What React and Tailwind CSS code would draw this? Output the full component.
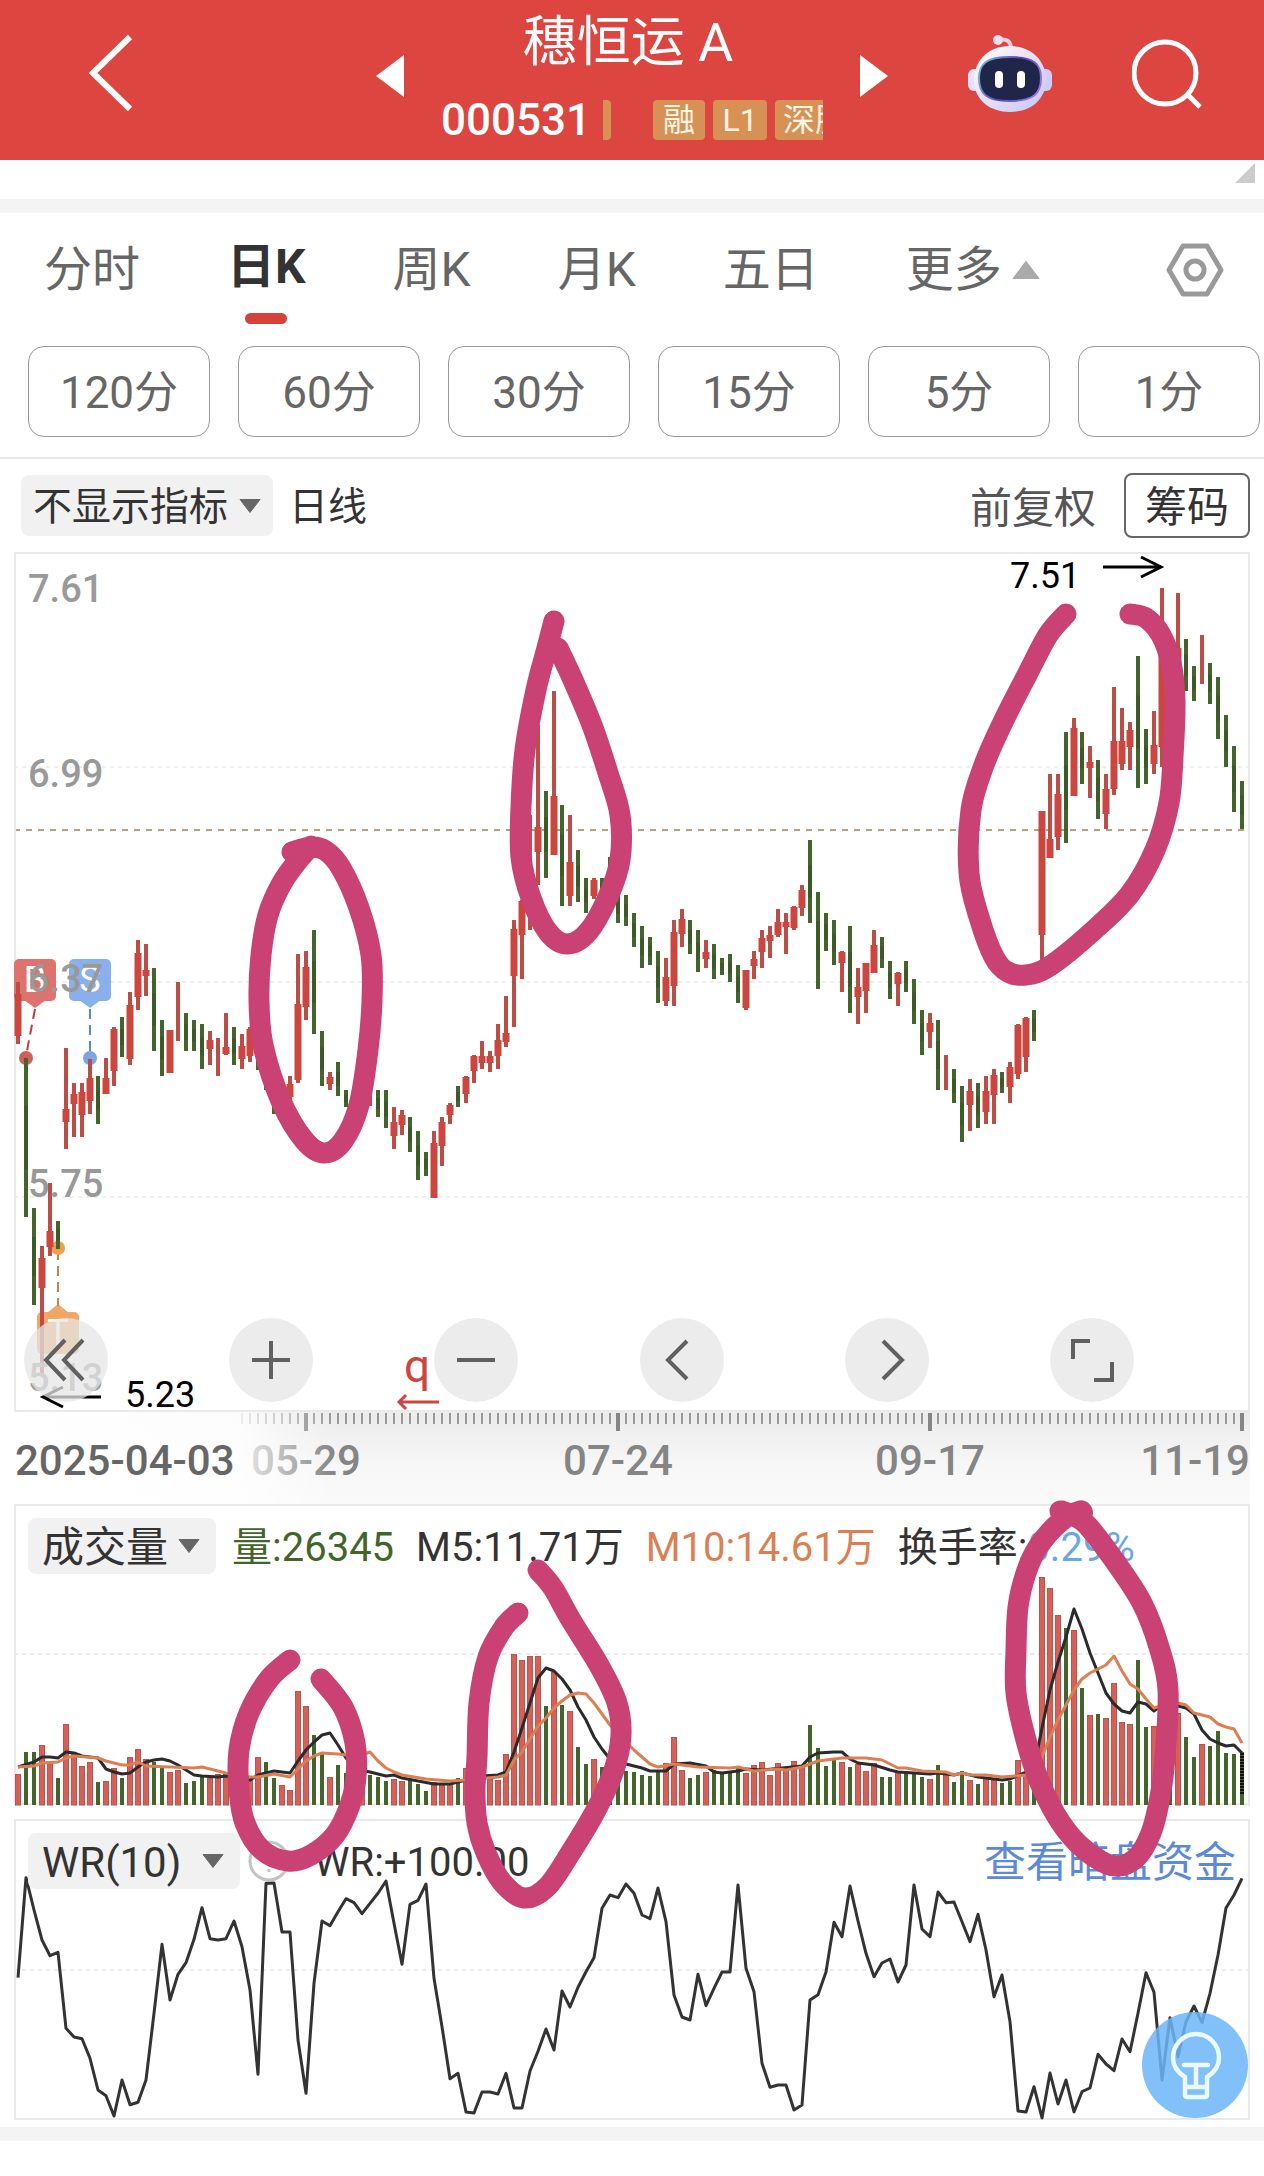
import React from "react";

const RED = "#cb463e";
const WICK = "#bd4d44";
const GREEN = "#43652b";
const GREEN_BODY = "#3a5b24";

/* index, kind, high, low, body top, body bottom (chart units) */
const CANDLES = [
  [0, "R", 982, 1044, 994, 1036], [1, "G", 1058, 1217], [2, "G", 1208, 1305],
  [3, "R", 1246, 1374, 1258, 1288], [4, "R", 1183, 1256, 1231, 1247], [5, "G", 1221, 1249],
  [6, "R", 1048, 1149, 1109, 1122], [7, "R", 1083, 1137, 1094, 1104], [8, "R", 1083, 1137, 1092, 1115],
  [9, "R", 1059, 1114, 1078, 1101], [10, "G", 1076, 1124], [11, "R", 1058, 1094, 1078, 1094],
  [12, "R", 1027, 1086, 1029, 1071], [13, "G", 1017, 1057], [14, "R", 992, 1065, 1005, 1059],
  [15, "R", 940, 1010, 953, 997], [16, "R", 944, 996, 970, 976], [17, "G", 968, 1051],
  [18, "G", 1020, 1076], [19, "R", 1030, 1073, 1030, 1073], [20, "R", 982, 1041],
  [21, "G", 1013, 1051], [22, "G", 1020, 1051], [23, "G", 1024, 1069],
  [24, "R", 1031, 1065, 1040, 1049], [25, "R", 1038, 1076], [26, "R", 1013, 1055, 1047, 1054],
  [27, "G", 1027, 1065], [28, "R", 1034, 1069, 1046, 1059], [29, "R", 1027, 1062, 1029, 1056],
  [30, "G", 1040, 1070], [31, "G", 1055, 1090], [32, "G", 1075, 1114], [33, "R", 1079, 1110],
  [34, "R", 1076, 1102, 1084, 1097], [35, "R", 954, 1083, 1004, 1080], [36, "R", 951, 1020, 967, 1007],
  [37, "G", 930, 1034], [38, "G", 1031, 1086], [39, "R", 1072, 1090, 1077, 1084],
  [40, "G", 1062, 1096], [41, "G", 1090, 1107], [42, "G", 1090, 1115], [43, "R", 1090, 1110],
  [44, "R", 1088, 1106], [45, "G", 1090, 1117], [46, "G", 1090, 1128],
  [47, "R", 1107, 1149, 1122, 1136], [48, "R", 1110, 1135, 1115, 1125], [49, "G", 1117, 1152],
  [50, "G", 1131, 1180], [51, "G", 1152, 1176], [52, "R", 1131, 1198, 1143, 1198],
  [53, "R", 1117, 1166, 1122, 1146], [54, "R", 1103, 1124, 1105, 1115], [55, "G", 1086, 1107],
  [56, "R", 1076, 1103, 1077, 1094], [57, "R", 1055, 1083, 1056, 1071], [58, "R", 1041, 1069, 1056, 1063],
  [59, "R", 1051, 1072, 1056, 1063], [60, "R", 1024, 1069, 1040, 1056], [61, "R", 996, 1047, 1033, 1042],
  [62, "R", 920, 1027, 929, 976], [63, "R", 900, 979, 901, 935], [64, "R", 815, 930],
  [65, "R", 725, 885, 827, 852], [66, "G", 791, 878], [67, "R", 691, 855, 796, 855],
  [68, "G", 805, 906], [69, "R", 815, 906, 862, 896], [70, "G", 850, 902], [71, "G", 878, 913],
  [72, "R", 878, 899, 880, 896], [73, "G", 878, 899], [74, "G", 857, 907], [75, "G", 893, 923],
  [76, "G", 895, 926], [77, "G", 913, 947], [78, "G", 926, 968], [79, "G", 937, 965],
  [80, "G", 951, 1003], [81, "R", 958, 1006, 977, 1001], [82, "R", 920, 1006, 932, 986],
  [83, "R", 909, 947, 919, 934], [84, "G", 920, 954], [85, "G", 930, 972], [86, "R", 940, 968, 952, 959],
  [87, "G", 944, 979], [88, "G", 958, 975], [89, "G", 954, 982], [90, "G", 965, 1003],
  [91, "R", 970, 1010, 970, 1008], [92, "R", 951, 979, 959, 966], [93, "R", 930, 968, 938, 952],
  [94, "R", 926, 958, 935, 941], [95, "R", 909, 937, 922, 935], [96, "R", 913, 954, 922, 927],
  [97, "R", 906, 930, 907, 928], [98, "R", 885, 916, 890, 908], [99, "G", 840, 923],
  [100, "G", 892, 989], [101, "G", 913, 951], [102, "G", 920, 965], [103, "R", 951, 992, 952, 963],
  [104, "G", 926, 1013], [105, "R", 968, 1024, 987, 997], [106, "R", 963, 1013, 963, 991],
  [107, "R", 930, 973, 945, 973], [108, "G", 937, 968], [109, "G", 961, 999], [110, "R", 972, 1006, 973, 984],
  [111, "G", 961, 992], [112, "G", 979, 1024], [113, "G", 1010, 1055], [114, "R", 1013, 1048, 1023, 1032],
  [115, "G", 1020, 1090], [116, "R", 1055, 1090], [117, "G", 1069, 1103], [118, "G", 1086, 1142],
  [119, "R", 1079, 1131, 1091, 1105], [120, "G", 1083, 1128], [121, "R", 1076, 1124, 1091, 1112],
  [122, "R", 1069, 1124, 1075, 1095], [123, "G", 1072, 1093], [124, "R", 1062, 1103, 1067, 1087],
  [125, "R", 1024, 1079, 1025, 1074], [126, "R", 1017, 1072, 1018, 1057], [127, "G", 1010, 1041],
  [128, "R", 811, 965, 811, 935], [129, "R", 774, 858, 839, 858], [130, "R", 774, 850, 794, 837],
  [131, "G", 732, 843], [132, "R", 718, 796, 728, 796], [133, "G", 732, 784], [134, "R", 746, 798, 762, 768],
  [135, "G", 760, 819], [136, "R", 774, 829, 789, 814], [137, "R", 687, 795, 741, 789],
  [138, "R", 708, 770, 741, 764], [139, "R", 722, 770, 730, 747], [140, "G", 656, 788],
  [141, "G", 729, 784], [142, "R", 711, 774, 745, 764], [143, "R", 588, 767, 653, 747],
  [144, "G", 640, 700], [145, "R", 593, 700, 648, 700], [146, "G", 639, 691], [147, "G", 666, 701],
  [148, "R", 635, 684], [149, "G", 663, 704], [150, "G", 677, 739], [151, "G", 715, 767],
  [152, "G", 746, 812], [153, "G", 781, 829],
];

/* bar height per day, with R/G for up and down days */
const VOLUMES =
  "31R 53G 53G 60R 43R 27G 81R 51R 39R 43R 23G 24R 37R 27G 48R 56R 46R 43G 37G 33R 35R 22G 24G 28G 27R 31R 31R 25R 25G 25R 48R 43G 27G 20R 15R 114R 99R 70G 51G 28R 40G 32G 32G 30R 30G 28G 24G 26R 24R 25G 21G 14G 23R 22R 21R 27G 37R 28R 26R 26R 25R 51R 151R 145R 149R 149R 99G 133R 100G 94R 58G 41G 46R 38G 45G 32G 34G 33G 30G 29G 35G 42R 68R 35R 27G 30G 33R 35G 32G 32G 37G 32R 40R 43R 30R 42R 37R 44R 38R 80G 57G 39G 45G 43R 38G 41R 34R 42R 28G 28G 33R 33G 32G 28G 26R 40G 33R 23G 34G 25R 21G 27R 27R 22G 24G 45R 31R 42G 228R 217R 190R 177G 175R 117G 90R 91G 87R 122R 83R 81R 145G 78G 79R 115R 80G 92R 68G 48G 61R 59G 74G 52G 51G 53G"
    .split(" ");

const WR_POINTS = [
  503, 203, 300, 390, 437, 427, 655, 681, 686, 745, 840, 857, 918, 810, 884, 877, 810, 610, 403, 570, 493, 458,
  388, 293, 386, 390, 386, 333, 410, 540, 793, 220, 219, 366, 366, 690, 850, 520, 333, 347, 305, 266, 278, 311,
  280, 250, 213, 340, 463, 283, 271, 222, 505, 650, 806, 790, 906, 909, 846, 846, 852, 790, 894, 894, 783, 724,
  657, 720, 543, 591, 532, 485, 443, 295, 255, 263, 222, 250, 315, 326, 234, 335, 555, 621, 630, 493, 587, 535,
  486, 486, 225, 475, 545, 760, 832, 825, 825, 900, 885, 570, 554, 486, 337, 380, 228, 333, 430, 500, 459, 447,
  516, 465, 225, 357, 380, 246, 278, 276, 335, 395, 313, 420, 560, 495, 635, 903, 906, 830, 924, 789, 882, 810,
  906, 845, 834, 733, 762, 782, 687, 725, 610, 488, 547, 810, 623, 740, 635, 588, 638, 550, 435, 294, 255, 205,
];

const MA5 =
  "18,1767 34,1762 42,1757 50,1757 58,1758 66,1752 74,1753 82,1756 98,1758 106,1769 114,1772 122,1774 130,1773 138,1767 146,1762 154,1760 162,1759 170,1761 178,1765 186,1770 194,1775 202,1776 218,1777 226,1776 250,1780 258,1775 274,1771 290,1773 298,1761 306,1750 314,1742 322,1735 330,1733 338,1745 346,1758 360,1770 370,1772 386,1776 394,1775 402,1778 418,1781 434,1784 450,1784 466,1780 474,1778 482,1776 498,1775 506,1772 514,1752 522,1728 530,1703 538,1678 546,1668 554,1671 562,1679 570,1690 578,1707 586,1720 594,1737 602,1749 610,1759 626,1764 642,1768 650,1771 666,1771 674,1764 690,1763 706,1766 714,1772 722,1773 738,1771 746,1769 762,1770 802,1766 810,1757 818,1753 834,1752 842,1752 850,1759 858,1763 874,1765 890,1770 898,1772 914,1773 930,1774 938,1773 954,1775 962,1773 978,1777 994,1779 1002,1780 1010,1779 1026,1772 1034,1765 1038,1748 1042,1728 1050,1690 1058,1662 1066,1637 1074,1609 1082,1629 1090,1653 1098,1673 1106,1693 1114,1704 1122,1711 1130,1713 1138,1702 1146,1704 1154,1711 1162,1705 1178,1706 1186,1708 1194,1714 1202,1730 1210,1739 1218,1743 1226,1746 1234,1745 1242,1753";

const MA10 =
  "18,1767 34,1766 42,1763 58,1762 66,1758 74,1756 98,1758 106,1761 114,1763 122,1765 130,1765 138,1762 146,1766 170,1767 194,1768 202,1767 218,1771 226,1773 250,1777 258,1777 274,1774 290,1777 298,1769 306,1761 314,1756 322,1753 338,1754 346,1755 362,1755 370,1752 378,1761 386,1768 394,1772 402,1775 426,1779 450,1781 466,1780 498,1777 506,1775 514,1760 522,1752 530,1739 538,1726 546,1718 554,1708 562,1701 570,1695 578,1693 586,1694 594,1703 602,1714 610,1725 626,1742 634,1750 642,1757 650,1764 658,1767 674,1764 682,1765 698,1767 730,1768 738,1767 754,1771 778,1769 786,1770 802,1767 818,1761 842,1758 866,1758 882,1760 890,1764 898,1768 906,1768 922,1771 946,1772 954,1775 962,1773 970,1775 986,1775 1002,1777 1026,1775 1036,1772 1042,1757 1050,1737 1058,1720 1066,1705 1074,1690 1082,1679 1090,1673 1098,1669 1106,1665 1114,1656 1122,1671 1130,1684 1138,1689 1146,1699 1154,1708 1166,1704 1178,1703 1186,1705 1194,1713 1210,1717 1218,1724 1226,1727 1234,1729 1242,1743";

/* hand-drawn marker strokes */
const STROKES = [
  [[311, 846], [300, 858], [282, 883], [268, 915], [261, 955], [259, 1000], [263, 1045], [281, 1101], [304, 1140], [324, 1153], [343, 1141], [359, 1105], [368, 1050], [372, 1000], [371, 955], [359, 908], [341, 868], [326, 851], [311, 847], [292, 852]],
  [[554, 621], [547, 648], [536, 690], [525, 750], [521, 807], [521, 857], [531, 898], [548, 932], [567, 944], [588, 932], [608, 897], [620, 860], [620, 815], [608, 773], [592, 725], [573, 680], [558, 648]],
  [[1066, 614], [1048, 635], [1028, 673], [1004, 720], [984, 765], [971, 810], [969, 873], [979, 917], [994, 957], [1008, 972], [1026, 975], [1050, 966], [1093, 931], [1130, 894], [1155, 850], [1169, 803], [1173, 757], [1175, 700], [1171, 663], [1161, 635], [1146, 618], [1130, 614]],
  [[290, 1660], [269, 1679], [249, 1713], [239, 1750], [239, 1790], [245, 1823], [262, 1850], [288, 1861], [311, 1855], [335, 1835], [350, 1805], [356, 1777], [355, 1743], [343, 1707], [321, 1679]],
  [[518, 1613], [504, 1627], [488, 1657], [479, 1703], [477, 1757], [475, 1790], [477, 1823], [486, 1853], [502, 1882], [524, 1898], [547, 1887], [571, 1852], [596, 1810], [614, 1770], [621, 1735], [617, 1703], [600, 1667], [571, 1620], [553, 1588], [538, 1570]],
  [[1060, 1511], [1080, 1516], [1080, 1511], [1060, 1522], [1038, 1547], [1026, 1573], [1018, 1607], [1016, 1650], [1016, 1693], [1026, 1740], [1040, 1783], [1061, 1823], [1085, 1850], [1114, 1866], [1136, 1858], [1151, 1833], [1160, 1797], [1165, 1757], [1168, 1690], [1159, 1647], [1142, 1603], [1114, 1560], [1085, 1523], [1062, 1511]],
];

const GLYPHS = "font-['Roboto','Noto_Sans_CJK_SC',sans-serif]";
const dayX = (i) => 18 + 8 * i;

function smooth(p) {
  let d = `M${p[0][0]} ${p[0][1]}`;
  for (let i = 0; i < p.length - 1; i++) {
    const a = p[i - 1] || p[i], b = p[i], c = p[i + 1], e = p[i + 2] || c;
    d += ` C${b[0] + (c[0] - a[0]) / 6} ${b[1] + (c[1] - a[1]) / 6} ${c[0] - (e[0] - b[0]) / 6} ${c[1] - (e[1] - b[1]) / 6} ${c[0]} ${c[1]}`;
  }
  return d;
}

function Triangle({ className, up }) {
  return (
    <svg viewBox="0 0 22 15" className={className} aria-hidden="true">
      <path d={up ? "M11 1 21 14H1Z" : "M1 1H21L11 14Z"} fill="currentColor" stroke="currentColor" strokeLinejoin="round" />
    </svg>
  );
}

function Robot() {
  return (
    <svg viewBox="0 0 84 80" className="h-20 w-[84px]" aria-hidden="true">
      <defs>
        <linearGradient id="shell" x1="0" y1="0" x2="1" y2="1">
          <stop offset="0" stopColor="#ffffff" />
          <stop offset="0.45" stopColor="#e9e2f4" />
          <stop offset="1" stopColor="#c5c5f4" />
        </linearGradient>
        <linearGradient id="rim" x1="0" y1="0" x2="1" y2="0.4">
          <stop offset="0" stopColor="#7fc6dc" />
          <stop offset="0.6" stopColor="#5b3fb5" />
          <stop offset="1" stopColor="#8e6fe8" />
        </linearGradient>
      </defs>
      <path d="M31 6C38 4 43 7 43 15" fill="none" stroke="#f6cfd8" strokeWidth="4" />
      <circle cx="30" cy="6" r="5" fill="#efdfee" />
      <rect x="0" y="35" width="14" height="22" rx="6" fill="#e6e2f5" />
      <rect x="70" y="35" width="14" height="22" rx="6" fill="#cfcdf4" />
      <path d="M42 12C65 12 78 28 78 46C78 66 62 78 42 78C22 78 6 66 6 46C6 28 19 12 42 12Z" fill="url(#shell)" />
      <path d="M42 23C66 23 73 30 73 44C73 60 65 67 42 67C19 67 11 60 11 44C11 30 18 23 42 23Z" fill="#20264a" stroke="url(#rim)" strokeWidth="2" />
      <rect x="27" y="37" width="8" height="17" rx="4" fill="#fff" />
      <rect x="49" y="37" width="8" height="17" rx="4" fill="#fff" />
    </svg>
  );
}

function Header() {
  return (
    <header className="grid h-40 grid-cols-[1fr_512px_1fr] items-center bg-[#dc4540] text-white">
      <div className="-mt-3.5 pl-[86px]">
        <button aria-label="返回" className="block">
          <svg viewBox="0 0 48 78" className="h-[78px] w-12" fill="none" stroke="currentColor" strokeWidth="6">
            <path d="M44 3 7 39 44 75" />
          </svg>
        </button>
      </div>
      <div className="flex items-center justify-between">
        <button aria-label="上一只" className="-mt-2">
          <svg viewBox="0 0 28 42" className="h-[42px] w-7"><path d="M28 0V42L0 21Z" fill="currentColor" /></svg>
        </button>
        <div className="flex w-[382px] flex-col">
          <h1 className="pr-2 pt-1 text-center text-[54px] leading-[76px]">穗恒运 A</h1>
          <div className="flex h-[78px] items-center overflow-hidden">
            <span className="w-[162px] shrink-0 text-[44px] font-medium">000531</span>
            <span className="h-10 w-2 shrink-0 rounded-r bg-[#d89154]" />
            <div className="ml-[42px] flex shrink-0 gap-2 text-[32px] leading-10 text-[#fff6e6]">
              <span className="w-[52px] rounded bg-[#d89154] text-center">融</span>
              <span className="w-[54px] rounded bg-[#d89154] text-center">L1</span>
              <span className="w-[90px] rounded bg-[#d89154] pl-2">深股</span>
            </div>
          </div>
        </div>
        <button aria-label="下一只" className="-mt-2">
          <svg viewBox="0 0 28 42" className="h-[42px] w-7"><path d="M0 0V42L28 21Z" fill="currentColor" /></svg>
        </button>
      </div>
      <div className="-mt-3 flex items-center gap-20 pl-20">
        <button aria-label="智能助手"><Robot /></button>
        <button aria-label="搜索">
          <svg viewBox="0 0 70 70" className="h-[70px] w-[70px]" fill="none" stroke="currentColor" strokeWidth="5">
            <circle cx="33" cy="34" r="31" />
            <path d="M55 55 68 68" />
          </svg>
        </button>
      </div>
    </header>
  );
}

function Tabs() {
  return (
    <nav className="flex h-[133px] items-start gap-[87px] pl-11 pt-[30px] text-5xl text-[#666]">
      <button className="h-[54px]">分时</button>
      <button className="flex flex-col items-center font-bold text-[#333]">
        <span className="h-[54px]">日K</span>
        <span className="mt-4 h-[11px] w-[42px] rounded-full bg-[#d6423a]" />
      </button>
      <button className="h-[54px]">周K</button>
      <button className="h-[54px]">月K</button>
      <button className="h-[54px]">五日</button>
      <button className="flex h-[54px] items-center gap-2.5">
        更多
        <Triangle up className="h-6 w-7 text-[#aaa]" />
      </button>
      <button aria-label="设置" className="ml-auto mr-10">
        <svg viewBox="0 0 58 54" className="h-[54px] w-[58px]" fill="none" stroke="#999" strokeWidth="5" strokeLinejoin="round">
          <path d="M17 3H41L55 27 41 51H17L3 27Z" />
          <circle cx="29" cy="27" r="9" />
        </svg>
      </button>
    </nav>
  );
}

function Periods() {
  return (
    <div className="flex gap-7 border-b-2 border-[#e8e8e8] pb-5 pl-7 pr-1">
      {["120分", "60分", "30分", "15分", "5分", "1分"].map((t) => (
        <button key={t} className="h-[91px] flex-1 rounded-2xl border border-[#999] pt-1 text-[44px] text-[#666]">
          {t}
        </button>
      ))}
    </div>
  );
}

function Picker({ label, value, className, selectClass }) {
  return (
    <label className={`flex items-center rounded-lg bg-[#f1f1f1] ${className}`}>
      <select aria-label={label} className={`appearance-none bg-transparent pt-1 text-[#333] outline-none ${selectClass}`}>
        <option>{value}</option>
      </select>
      <Triangle className="h-4 w-[22px] text-[#666]" />
    </label>
  );
}

function Flag({ x, y, color, letter, up }) {
  return (
    <g>
      <rect x={x - 21} y={y} width="42" height="42" rx="5" fill={color} />
      <path d={up ? `M${x - 11} ${y + 1} L${x} ${y - 8} L${x + 11} ${y + 1}Z` : `M${x - 11} ${y + 41} L${x} ${y + 49} L${x + 11} ${y + 41}Z`} fill={color} />
      <text x={x} y={y + 33} textAnchor="middle" fontSize="36" fill="#fff">{letter}</text>
    </g>
  );
}

function PriceChart() {
  return (
    <svg viewBox="14 552 1236 860" className={`block w-full overflow-visible ${GLYPHS}`} role="img" aria-label="日K线">
      {[767, 982, 1197].map((y) => (
        <path key={y} d={`M14 ${y}H1250`} stroke="#dedede" strokeDasharray="4 4" />
      ))}
      <path d="M14 830H1244" stroke="#b3a37c" strokeWidth="2" strokeDasharray="6 6" />
      <rect x="15" y="553" width="1234" height="858" fill="none" stroke="#e9e9e9" strokeWidth="2" />
      <Flag x={35} y={959} color="#de736e" letter="B" />
      <Flag x={90} y={959} color="#89b0ec" letter="S" />
      <Flag x={58} y={1312} color="#eea765" letter="T" up />
      <g strokeWidth="2" strokeDasharray="10 6">
        <path d="M35 1009 26 1056" stroke="#b5423c" />
        <path d="M90 1009V1056" stroke="#5b8fae" />
        <path d="M58 1250V1306" stroke="#b98a55" />
      </g>
      <circle cx="26" cy="1058" r="7" fill="#d2605a" />
      <circle cx="90" cy="1058" r="7" fill="#7fa4e6" />
      <circle cx="58" cy="1248" r="7" fill="#eda04f" />
      {CANDLES.map(([i, k, hi, lo, bt, bb]) => (
        <g key={i}>
          <rect x={dayX(i) - 2} y={hi} width="4" height={lo - hi} fill={k === "R" ? WICK : GREEN} />
          {k === "R" && bt && <rect x={dayX(i) - 3.5} y={bt} width="7" height={bb - bt} fill={RED} />}
          {k === "G" && (
            <rect x={dayX(i) - 2} y={hi + (lo - hi) * 0.3} width="4" height={(lo - hi) * 0.4} fill={GREEN_BODY} />
          )}
        </g>
      ))}
      <g fontSize="38" fontWeight="500" fill="#999">
        <text x="28" y="602">7.61</text>
        <text x="28" y="787">6.99</text>
        <text x="28" y="992">6.37</text>
        <text x="28" y="1197">5.75</text>
        <text x="28" y="1391">5.13</text>
      </g>
      <g fontSize="36" fill="#000">
        <text x="1010" y="588">7.51</text>
        <text x="125" y="1407">5.23</text>
      </g>
      <g fill="none" stroke="#000" strokeWidth="3">
        <path d="M1103 567H1161M1141 557 1161 567 1141 577" />
        <path d="M101 1397H43M63 1387 43 1397 63 1407" />
      </g>
      <text x="404" y="1382" fontSize="46" fill="#cb463e">q</text>
      <path d="M439 1402H399M406 1395 399 1402 406 1409" fill="none" stroke="#cb463e" strokeWidth="3" />
    </svg>
  );
}

const TOOLS = [
  ["最早", "M49 30 30 50 49 70M67 30 48 50 67 70"],
  ["放大", "M50 31V69M31 50H69"],
  ["缩小", "M31 50H69"],
  ["向左", "M55 31 36 50 55 69"],
  ["向右", "M46 31 65 50 46 69"],
  ["全屏", "M48 31H31V49M70 52V70H52"],
];

function Toolbar() {
  return (
    <div className="z-10 flex justify-between self-end pb-2.5 pl-2.5 pr-[116px] [grid-area:1/1]">
      {TOOLS.map(([name, d]) => (
        <button key={name} aria-label={name} className="size-[84px] rounded-full bg-[#e6e6e6]/75">
          <svg viewBox="8 8 84 84" className="size-full" fill="none" stroke="#606060" strokeWidth="4">
            <path d={d} />
          </svg>
        </button>
      ))}
    </div>
  );
}

function TimeAxis() {
  return (
    <svg viewBox="14 1412 1236 92" className={`block w-full ${GLYPHS}`} role="img" aria-label="时间轴">
      <defs>
        <linearGradient id="axisDown" x1="0" y1="0" x2="0" y2="1">
          <stop offset="0" stopColor="#ebebeb" />
          <stop offset="0.6" stopColor="#f7f7f7" />
          <stop offset="1" stopColor="#fafafa" />
        </linearGradient>
        <linearGradient id="axisFade" x1="0" y1="0" x2="1" y2="0">
          <stop offset="0" stopColor="#fff" />
          <stop offset="0.7" stopColor="#fff" stopOpacity="0.85" />
          <stop offset="1" stopColor="#fff" stopOpacity="0" />
        </linearGradient>
      </defs>
      <rect x="14" y="1412" width="1236" height="92" fill="url(#axisDown)" />
      {Array.from({ length: 126 }, (_, n) => n + 28).map((i) => (
        <path key={i} d={`M${dayX(i)} 1413V1424`} stroke="#999" strokeWidth="2" />
      ))}
      {[36, 75, 114, 153].map((i) => (
        <path key={i} d={`M${dayX(i)} 1413V1431`} stroke="#858585" strokeWidth="4" />
      ))}
      <g fontSize="42" fontWeight="500" fill="#858585">
        <text x="306" y="1475" textAnchor="middle">05-29</text>
        <text x="618" y="1475" textAnchor="middle">07-24</text>
        <text x="930" y="1475" textAnchor="middle">09-17</text>
        <text x="1250" y="1475" textAnchor="end">11-19</text>
      </g>
      <rect x="14" y="1412" width="320" height="92" fill="url(#axisFade)" />
      <text x="15" y="1475" fontSize="42" fontWeight="500" fill="#666">2025-04-03</text>
    </svg>
  );
}

function VolumeChart() {
  return (
    <svg viewBox="14 1504 1236 315" className="block w-full [grid-area:1/1]" role="img" aria-label="成交量图">
      <path d="M14 1654H1250" stroke="#d6d6d6" strokeDasharray="4 4" />
      <path d="M15 1806V1505H1249V1806" fill="none" stroke="#e9e9e9" strokeWidth="2" />
      <path d="M14 1804H1250" stroke="#eeeee6" strokeWidth="2" />
      {VOLUMES.map((v, i) => {
        const h = parseInt(v, 10);
        return v.endsWith("R") ? (
          <rect key={i} x={dayX(i) - 2.5} y={1805.5 - h} width="5" height={h - 0.5} fill="#d75f58" stroke="#b6564e" />
        ) : (
          <rect key={i} x={dayX(i) - 2} y={1805 - h} width="4" height={h} fill={GREEN} />
        );
      })}
      <path d="M1242 1753V1794" stroke="#111" strokeWidth="4" strokeDasharray="2 1" />
      <polyline points={MA5} fill="none" stroke="#2b2b2b" strokeWidth="3" strokeLinejoin="round" />
      <polyline points={MA10} fill="none" stroke="#db7f54" strokeWidth="3" strokeLinejoin="round" />
    </svg>
  );
}

function WrChart() {
  return (
    <svg viewBox="14 1819 1236 301" className="block w-full [grid-area:1/1]" role="img" aria-label="WR指标图">
      <path d="M14 1970H1250" stroke="#d6d6d6" strokeDasharray="4 4" />
      <rect x="15" y="1820" width="1234" height="299" fill="none" stroke="#e9e9e9" strokeWidth="2" />
      <polyline
        points={WR_POINTS.map((v, i) => `${dayX(i)},${(1810 + v / 3).toFixed(1)}`).join(" ")}
        fill="none" stroke="#333" strokeWidth="3" strokeLinejoin="round"
      />
    </svg>
  );
}

export default function App() {
  return (
    <main className={`relative min-h-screen overflow-hidden bg-white leading-tight ${GLYPHS}`}>
      <Header />
      <div className="flex h-[39px] items-start justify-end pr-[9px] pt-[3px]">
        <svg viewBox="0 0 20 20" className="size-5" aria-hidden="true"><path d="M20 0V20H0Z" fill="#ccc" /></svg>
      </div>
      <div className="h-3.5 bg-[#f4f4f4]" />
      <Tabs />
      <Periods />

      <div className="flex h-[93px] items-center pl-[21px] pr-3.5">
        <Picker label="主图指标" value="不显示指标" className="h-[61px] pl-3 pr-3" selectClass="w-[206px] text-[39px]" />
        <span className="ml-4 pt-1 text-[39px] text-[#333]">日线</span>
        <button className="ml-auto pt-2 text-[42px] text-[#555]">前复权</button>
        <button className="ml-7 h-[65px] w-[126px] rounded-lg border-2 border-[#666] pt-1 text-[42px] leading-none text-[#333]">筹码</button>
      </div>

      <div className="mx-3.5">
        <div className="grid">
          <div className="[grid-area:1/1]"><PriceChart /></div>
          <Toolbar />
        </div>
        <TimeAxis />

        <section className="grid">
          <VolumeChart />
          <div className="z-10 flex h-[84px] items-center whitespace-nowrap pl-3.5 text-[40px] text-[#333] [grid-area:1/1]">
            <Picker label="副图指标" value="成交量" className="h-14 pl-3.5 pr-4" selectClass="w-[136px] text-[42px]" />
            <div className="ml-4 flex gap-[22px] pt-1">
              <span className="text-[#43652b]">量:26345</span>
              <span>M5:11.71万</span>
              <span className="text-[#db7f54]">M10:14.61万</span>
              <span>换手率:<span className="text-[#6aa9dd]">0.29%</span></span>
            </div>
          </div>
        </section>

        <section className="grid">
          <WrChart />
          <div className="z-10 flex h-[84px] items-center whitespace-nowrap pl-3.5 pr-3.5 text-[40px] text-[#333] [grid-area:1/1]">
            <Picker label="指标" value="WR(10)" className="h-14 pl-3.5 pr-4" selectClass="w-40 text-[42px]" />
            <button aria-label="说明" className="ml-2">
              <svg viewBox="0 0 42 42" className="size-[42px]" fill="none" stroke="#c4c4c4" strokeWidth="3">
                <circle cx="21" cy="21" r="19" />
                <path d="M15 17C15 9 27 9 27 16C27 21 21 20 21 26M21 29V32" />
              </svg>
            </button>
            <span className="ml-6 pt-1">WR:+100.00</span>
            <a href="#funds" className="ml-auto pt-1 text-[42px] text-[#5c8ad6]">查看暗盘资金</a>
          </div>
        </section>
      </div>

      <div className="mt-[7px] h-3.5 bg-[#f4f4f4]" />

      <svg viewBox="0 0 1264 2176" className="pointer-events-none absolute left-0 top-0 z-20 w-full" aria-hidden="true">
        {STROKES.map((s, i) => (
          <path key={i} d={smooth(s)} fill="none" stroke="#c94273" strokeWidth="21" strokeLinecap="round" strokeLinejoin="round" />
        ))}
      </svg>

      <button aria-label="提示" className="absolute right-4 top-[2012px] z-30 size-[106px] rounded-full bg-[#6bb5f7]/85">
        <svg viewBox="0 0 106 106" className="size-full" fill="none" stroke="#eafaff" strokeWidth="4.5" strokeLinecap="round" strokeLinejoin="round">
          <path d="M43 83V65C35 60 31 53 31 46A23 24 0 0 1 77 46C77 53 73 60 65 65V83Q65 85 62 85H46Q43 85 43 83ZM43 75H65M42 53H66M54 53V73" />
        </svg>
      </button>
    </main>
  );
}
